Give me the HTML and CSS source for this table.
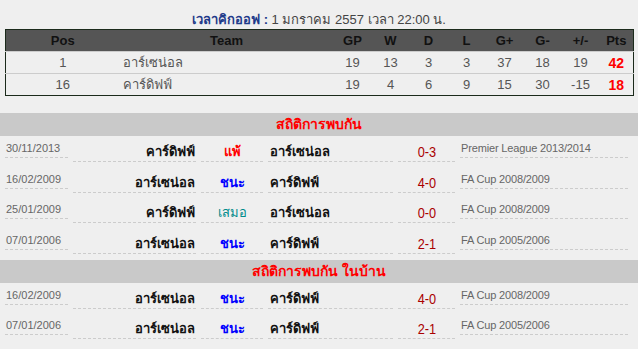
FILE: index.html
```html
<!DOCTYPE html>
<html lang="th">
<head>
<meta charset="utf-8">
<link rel="stylesheet" href="styles.css">
</head>
<body>
<div class="kickoff"><span class="kickoff-label">เวลาคิกออฟ :</span> 1 มกราคม 2557 เวลา 22:00 น.</div>
<table class="standings">
  <colgroup>
    <col class="c-pos"><col class="c-team"><col class="c-num"><col class="c-num"><col class="c-num"><col class="c-num"><col class="c-num"><col class="c-num"><col class="c-num"><col class="c-pts">
  </colgroup>
  <thead>
    <tr><th>Pos</th><th>Team</th><th>GP</th><th>W</th><th>D</th><th>L</th><th>G+</th><th>G-</th><th>+/-</th><th>Pts</th></tr>
  </thead>
  <tbody>
    <tr><td>1</td><td class="team">อาร์เซน่อล</td><td>19</td><td>13</td><td>3</td><td>3</td><td>37</td><td>18</td><td>19</td><td class="pts">42</td></tr>
    <tr><td>16</td><td class="team">คาร์ดิฟฟ์</td><td>19</td><td>4</td><td>6</td><td>9</td><td>15</td><td>30</td><td>-15</td><td class="pts">18</td></tr>
  </tbody>
</table>

<div class="section-title">สถิติการพบกัน</div>
<div class="match">
  <div class="date">30/11/2013</div><div class="home">คาร์ดิฟฟ์</div><div class="result lose">แพ้</div><div class="away">อาร์เซน่อล</div><div class="score"><span>0-3</span></div><div class="comp">Premier League 2013/2014</div>
</div>
<div class="match">
  <div class="date">16/02/2009</div><div class="home">อาร์เซน่อล</div><div class="result win">ชนะ</div><div class="away">คาร์ดิฟฟ์</div><div class="score"><span>4-0</span></div><div class="comp">FA Cup 2008/2009</div>
</div>
<div class="match">
  <div class="date">25/01/2009</div><div class="home">คาร์ดิฟฟ์</div><div class="result draw">เสมอ</div><div class="away">อาร์เซน่อล</div><div class="score"><span>0-0</span></div><div class="comp">FA Cup 2008/2009</div>
</div>
<div class="match">
  <div class="date">07/01/2006</div><div class="home">อาร์เซน่อล</div><div class="result win">ชนะ</div><div class="away">คาร์ดิฟฟ์</div><div class="score"><span>2-1</span></div><div class="comp">FA Cup 2005/2006</div>
</div>

<div class="section-title">สถิติการพบกัน ในบ้าน</div>
<div class="match">
  <div class="date">16/02/2009</div><div class="home">อาร์เซน่อล</div><div class="result win">ชนะ</div><div class="away">คาร์ดิฟฟ์</div><div class="score"><span>4-0</span></div><div class="comp">FA Cup 2008/2009</div>
</div>
<div class="match">
  <div class="date">07/01/2006</div><div class="home">อาร์เซน่อล</div><div class="result win">ชนะ</div><div class="away">คาร์ดิฟฟ์</div><div class="score"><span>2-1</span></div><div class="comp">FA Cup 2005/2006</div>
</div>
</body>
</html>
```

FILE: styles.css
```css
html, body {
  margin: 0;
  padding: 0;
  background: #efefef;
}
body {
  font-family: "Liberation Sans", Arial, "Noto Sans", sans-serif;
  color: #333;
}
.kickoff {
  padding-top: 11px;
  height: 17px;
  line-height: 17px;
  font-size: 13px;
  color: #444;
  text-align: center;
}
.kickoff-label {
  color: #1e3a8a;
  font-weight: bold;
}
.standings {
  margin: 1px 0 0 5px;
  width: 628px;
  border-collapse: collapse;
  table-layout: fixed;
  border: 1px solid #1b2a1b;
  font-size: 13px;
}
.c-pos { width: 114px; }
.c-team { width: 214px; }
.c-num { width: 38px; }
.c-pts { width: 34px; }
.standings th {
  background: #555555;
  color: #111;
  font-weight: bold;
  height: 21px;
  padding: 0;
  text-align: center;
}
.standings td {
  height: 21px;
  padding: 0;
  text-align: center;
  color: #555;
  background: #efefef;
  border-top: 1px solid #cccccc;
}
.standings td.team {
  text-align: left;
  padding-left: 3px;
}
.standings td.pts {
  color: #ff0000;
  font-weight: bold;
  font-size: 14px;
}
.section-title {
  background: #c9c9c9;
  height: 23px;
  line-height: 23px;
  text-align: center;
  color: #ff0000;
  font-weight: bold;
  font-size: 14px;
  margin-bottom: 1px;
}
.standings + .section-title {
  margin-top: 17px;
}
.match {
  display: flex;
  align-items: flex-start;
  gap: 5px;
  padding-left: 5px;
  margin-bottom: 5.67px;
}
.match > div {
  border-bottom: 1px dashed #cccccc;
  box-sizing: border-box;
  white-space: nowrap;
}
.date, .comp {
  height: 21px;
  padding-top: 4px;
  line-height: 14px;
  font-size: 11px;
  color: #666;
}
.date { width: 63px; padding-left: 1px; }
.comp { width: 168px; padding-left: 1px; letter-spacing: -0.15px; }
.home, .result, .away, .score {
  height: 25px;
  padding-top: 7px;
  line-height: 16px;
  font-size: 13px;
  font-weight: bold;
  color: #111;
}
.home { width: 123px; text-align: right; padding-right: 1px; }
.away { width: 125px; padding-left: 2px; }
.result { width: 62px; text-align: center; }
.result.lose { color: #ff0000; }
.result.win { color: #0000ff; }
.result.draw { color: #008b8b; font-weight: normal; }
.score {
  width: 57px;
  text-align: center;
  font-weight: normal;
  font-size: 15px;
  color: #aa0000;
}
.score span {
  display: inline-block;
  transform: scaleX(0.85);
}
```
